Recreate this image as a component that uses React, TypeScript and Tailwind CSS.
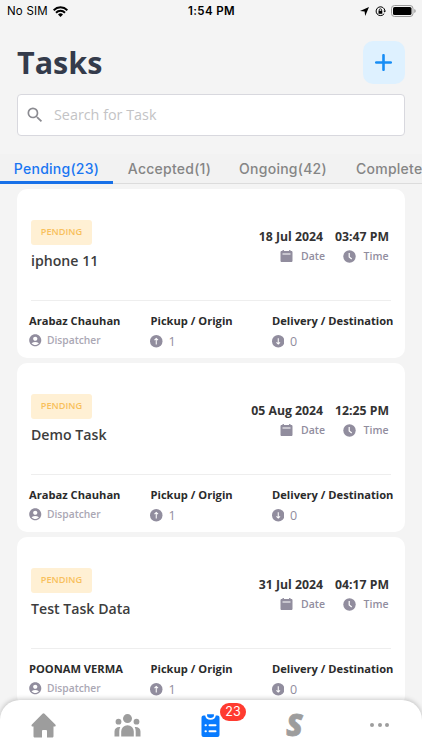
import React from 'react';
import { MdAccountCircle, MdSearch } from 'react-icons/md';

interface Task {
  title: string;
  date: string;
  time: string;
  dispatcher: string;
}

const tasks: Task[] = [
  { title: 'iphone 11', date: '18 Jul 2024', time: '03:47 PM', dispatcher: 'Arabaz Chauhan' },
  { title: 'Demo Task', date: '05 Aug 2024', time: '12:25 PM', dispatcher: 'Arabaz Chauhan' },
  { title: 'Test Task Data', date: '31 Jul 2024', time: '04:17 PM', dispatcher: 'POONAM VERMA' },
];

function StatusBar() {
  return (
    <div className="flex h-[22px] shrink-0 items-center pl-[7px] pr-[6px] font-['Inter',sans-serif] text-black">
      <div className="flex flex-1 items-center gap-[5px]">
        <span className="pt-px text-[11.5px] leading-none tracking-[0.2px]">No SIM</span>
        <svg className="h-[11px] w-[15px]" viewBox="0 0 15 11">
          <path d="M.6 4.2a9.8 9.8 0 0 1 13.8 0M3 6.7a6.4 6.4 0 0 1 9 0" fill="none" stroke="black" strokeWidth="2" />
          <path d="M5 8.5a3.6 3.6 0 0 1 5 0L7.5 11z" fill="black" />
        </svg>
      </div>
      <span className="pt-px text-[11.5px] font-semibold leading-none tracking-[0.4px]">1:54 PM</span>
      <div className="flex flex-1 items-center justify-end">
        <svg className="mr-[6px] h-[9px] w-[9px]" viewBox="0 0 9 9">
          <path d="M9 0 5.2 9 4.6 4.5 0 3.9z" fill="black" />
        </svg>
        <svg className="mr-[5px] h-[11px] w-[11px]" viewBox="0 0 11 11" fill="none" stroke="black">
          <path d="M9.2 7.6a4.4 4.4 0 1 1 .7-2.7" />
          <path d="M8.3 4.7h2.7L9.7 6.6z" fill="black" stroke="none" />
          <path d="M4.2 5V4a1.2 1.2 0 0 1 2.4 0v1" strokeWidth=".8" />
          <path d="M3.5 4.8h3.8v3H3.5z" fill="black" stroke="none" />
        </svg>
        <svg className="h-[12px] w-[25px]" viewBox="0 0 25 12">
          <rect x=".5" y=".5" width="21.5" height="11" rx="3" fill="none" stroke="#9b9b9b" />
          <rect x="2" y="2" width="18.5" height="8" rx="1.6" fill="black" />
          <path d="M23.4 4v4c1.6-.8 1.6-3.2 0-4z" fill="#8b8b8b" />
        </svg>
      </div>
    </div>
  );
}

function ArrowBadge({ down = false }: { down?: boolean }) {
  return (
    <svg className="-ml-[0.5px] h-[12.5px] w-[12.5px]" viewBox="0 0 12 12">
      <circle cx="6" cy="6" r="6" fill="#918d9e" />
      <path
        d={down ? 'M6 3v5.6M4.3 7 6 8.7 7.7 7' : 'M6 9V3.4M4.3 5 6 3.3 7.7 5'}
        fill="none"
        stroke="white"
        strokeWidth="1"
      />
    </svg>
  );
}

function TaskCard({ title, date, time, dispatcher }: Task) {
  return (
    <div className="h-[169px] shrink-0 rounded-[10px] bg-white pt-[30.5px]">
      <div className="flex h-[80px] justify-between pl-[14px] pr-[16px]">
        <div>
          <div className="flex h-[25px] w-[61px] items-center justify-center rounded-[3px] bg-[#fff0d4] text-[9.2px] font-semibold text-[#f8c05c]">
            PENDING
          </div>
          <div className="mt-[6.5px] text-[14.15px] font-semibold leading-[20px] text-[#3d3d3d]">{title}</div>
        </div>
        <div className="flex gap-[12px] pt-[8px] text-right">
          <div>
            <div className="text-[12.25px] font-bold leading-[17px] text-[#333333]">{date}</div>
            <div className="-mr-[2px] mt-[5px] flex h-[14px] items-center justify-end gap-[8px] text-[10.5px] font-semibold text-[#918d9e]">
              <svg className="h-[13px] w-[13px]" viewBox="0 0 13 13">
                <path d="M2.5 0h1.4v1h5.2V0h1.4v1h.7c.8 0 1.3.5 1.3 1.2v8.5c0 .7-.5 1.3-1.3 1.3H1.8C1 12 .5 11.4.5 10.7V2.2C.5 1.5 1 1 1.8 1h.7z" fill="#918d9e" />
                <path d="M2.5 4h8" stroke="white" />
              </svg>
              <span className="pt-px">Date</span>
            </div>
          </div>
          <div>
            <div className="text-[12.25px] font-bold leading-[17px] text-[#333333]">{time}</div>
            <div className="mr-[0.5px] mt-[5px] flex h-[14px] items-center justify-end gap-[8px] text-[10.5px] font-semibold text-[#918d9e]">
              <svg className="h-[13px] w-[13px]" viewBox="0 0 13 13">
                <circle cx="6.5" cy="6.5" r="6.2" fill="#918d9e" />
                <path d="M6.2 3v4l2.5 2" fill="none" stroke="white" strokeWidth="1.2" />
              </svg>
              <span className="pt-px">Time</span>
            </div>
          </div>
        </div>
      </div>
      <div className="mx-[14px] border-t border-[#eeeeee]" />
      <div className="flex pl-[12px] pt-[11.5px]">
        <div className="w-[121.5px]">
          <div className="whitespace-nowrap text-[11.15px] font-bold leading-[17px] text-[#2b2b2b]">{dispatcher}</div>
          <div className="mt-[3px] flex h-[16px] items-center gap-[4.5px] text-[10.25px] font-semibold text-[#aaa7b4]">
            <MdAccountCircle className="-ml-px h-[14.5px] w-[14.5px] text-[#918d9e]" />
            <span className="pt-px">Dispatcher</span>
          </div>
        </div>
        <div className="w-[121.5px]">
          <div className="whitespace-nowrap text-[11.15px] font-bold leading-[17px] text-[#2b2b2b]">Pickup / Origin</div>
          <div className="mt-[4.5px] flex h-[16px] items-center gap-[6px] text-[12.5px] text-[#918d9e]">
            <ArrowBadge />
            <span className="pt-px">1</span>
          </div>
        </div>
        <div>
          <div className="whitespace-nowrap text-[11.15px] font-bold leading-[17px] text-[#2b2b2b]">Delivery / Destination</div>
          <div className="mt-[4.5px] flex h-[16px] items-center gap-[6px] text-[12.5px] text-[#918d9e]">
            <ArrowBadge down />
            <span className="pt-px">0</span>
          </div>
        </div>
      </div>
    </div>
  );
}

function BottomNav() {
  return (
    <nav className="absolute inset-x-0 bottom-0 flex h-[50px] items-center rounded-t-[20px] bg-white shadow-[0_-1px_5px_rgba(0,0,0,0.22)]">
      <div className="flex w-[87px] justify-center">
        <svg className="h-[25px] w-[25px]" viewBox="0 0 25 25" fill="#9d9d9d">
          <path d="M11.5.7a1.5 1.5 0 0 1 2 0L24.3 11.5c.8.8.3 1.9-.7 1.9h-1.1V23c0 1-.6 1.500-1.5 1.500h-5V18a1 1 0 0 0-1-1h-3a1 1 0 0 0-1 1v6.500H4c-.9 0-1.5-.5-1.5-1.500v-9.600h-.9c-1 0-1.500-1.100-.7-1.900z" />
        </svg>
      </div>
      <div className="flex w-[81px] justify-center">
        <svg className="h-[23px] w-[27px]" viewBox="0 0 27 23" fill="#9d9d9d">
          <circle cx="13.5" cy="4.6" r="4.5" />
          <circle cx="4.5" cy="7.7" r="2.9" />
          <circle cx="22.5" cy="7.7" r="2.9" />
          <path d="M7.2 22.5v-5a6.300 6.300 0 0 1 12.600 0v5zM.5 22.500v-5c0-3.300 2.600-4.900 5.800-4.500a9 9 0 0 0-1 4.200v5.300zM26.500 22.500v-5c0-3.300-2.600-4.900-5.800-4.500a9 9 0 0 1 1 4.200v5.300z" />
        </svg>
      </div>
      <div className="relative flex w-[85px] justify-center">
        <svg className="h-[24px] w-[19px]" viewBox="0 0 19 24">
          <path d="M2.5 2.500h1.700c.3 2.700 2.200 4.300 5.300 4.300s5-1.600 5.300-4.300h1.700a2 2 0 0 1 2 2V22a2 2 0 0 1-2 2h-14a2 2 0 0 1-2-2V4.500a2 2 0 0 1 2-2z" fill="#087bff" />
          <path d="M6.100 1.200h6.800v1.300c0 1.600-1.200 2.400-3.400 2.400s-3.400-.8-3.400-2.400z" fill="#087bff" />
          <g stroke="white" strokeWidth="2" strokeLinecap="round">
            <path d="M4.500 12.200h.4M8.500 12.200h6M4.500 18.200h.4M8.500 18.200h6" />
          </g>
        </svg>
        <span className="absolute left-[52px] top-[-10px] flex h-[18px] w-[26px] items-center justify-center rounded-full bg-[#ff3b30] pt-px font-['Inter',sans-serif] text-[12.5px] text-white">
          23
        </span>
      </div>
      <div className="flex w-[83px] justify-center text-[30px] font-extrabold italic leading-none text-[#9d9d9d] [-webkit-text-stroke:0.8px_#9d9d9d]">S</div>
      <div className="flex flex-1 justify-center gap-[3.5px] pl-px">
        <span className="h-[4px] w-[4px] rounded-full bg-[#9d9d9d]" />
        <span className="h-[4px] w-[4px] rounded-full bg-[#9d9d9d]" />
        <span className="h-[4px] w-[4px] rounded-full bg-[#9d9d9d]" />
      </div>
    </nav>
  );
}

export default function App() {
  return (
    <div className="relative flex h-[750px] w-[422px] flex-col overflow-hidden bg-[#f4f4f4] font-['Open_Sans',sans-serif]">
      <StatusBar />
      <header className="flex h-[72px] shrink-0 items-center justify-between px-[17px] pt-[8px]">
        <h1 className="text-[30.5px] font-bold leading-none text-[#343b4b]">Tasks</h1>
        <button className="flex h-[43px] w-[42.5px] items-center justify-center rounded-[10px] bg-[#def1ff]">
          <svg className="h-[17px] w-[17px]" viewBox="0 0 17 17">
            <path d="M8.5 1.2v14.6M1.2 8.5h14.6" stroke="#178df5" strokeWidth="2.6" strokeLinecap="round" />
          </svg>
        </button>
      </header>
      <div className="mx-[17px] flex h-[42px] shrink-0 items-center gap-[9px] rounded-[4px] border border-[#d8d8de] bg-white pl-[7px] text-[14.35px] text-[#c3c3c5]">
        <MdSearch className="h-[20px] w-[20px] text-[#8b8b91]" />
        Search for Task
      </div>
      <div className="mt-[18px] flex h-[30px] shrink-0 whitespace-nowrap border-b border-[#dcdcdc] bg-[#f2f2f2] font-['Inter',sans-serif] text-[14px] font-medium leading-[29px] tracking-[0.25px] text-[#858585]">
        <span className="h-[30px] w-[113px] shrink-0 border-b-[3px] border-[#1871e8] text-center text-[#1976f2]">Pending(23)</span>
        <span className="w-[113px] shrink-0 text-center">Accepted(1)</span>
        <span className="w-[114px] shrink-0 text-center">Ongoing(42)</span>
        <span className="shrink-0 pl-[16px]">Complete</span>
      </div>
      <main className="flex flex-col gap-[5px] px-[17px] pt-[5px]">
        {tasks.map((task) => (
          <TaskCard key={task.title} {...task} />
        ))}
      </main>
      <BottomNav />
    </div>
  );
}
